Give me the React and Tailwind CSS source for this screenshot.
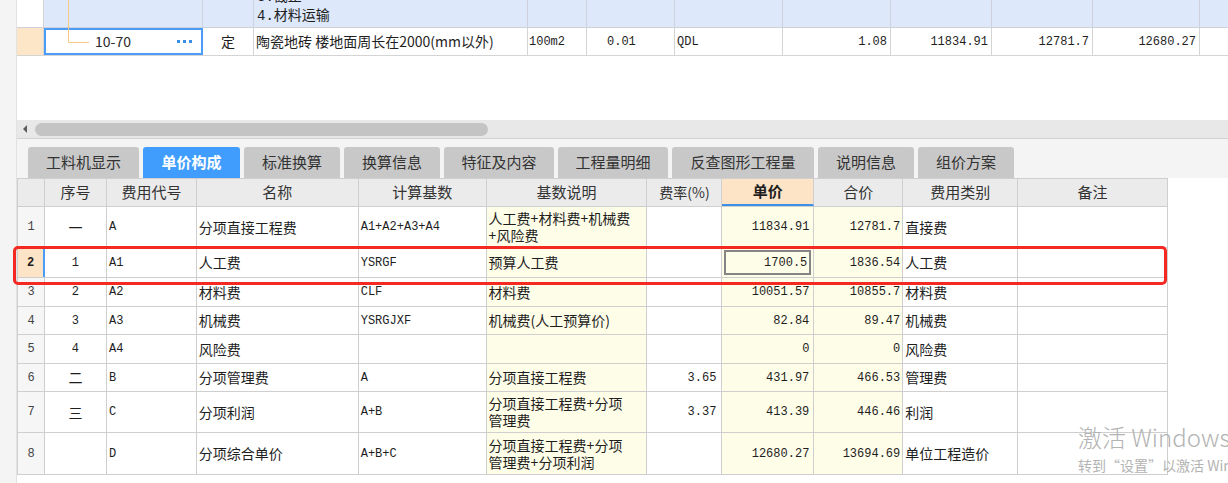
import React from "react";

const CJK = "font-['Noto_Sans_CJK_SC','Noto_Sans',sans-serif]";
const MONO = "font-['Liberation_Mono','Noto_Sans_CJK_SC',monospace]";

const tabs = [
  { label: "工料机显示", w: "w-[111px]" },
  { label: "单价构成", w: "w-[97px]", active: true },
  { label: "标准换算", w: "w-[96px]" },
  { label: "换算信息", w: "w-[96px]" },
  { label: "特征及内容", w: "w-[110px]" },
  { label: "工程量明细", w: "w-[110px]" },
  { label: "反查图形工程量", w: "w-[142px]" },
  { label: "说明信息", w: "w-[96px]" },
  { label: "组价方案", w: "w-[96px]" },
];

// lower table columns
const cols = [
  { key: "n", w: "w-[27px]", head: "" },
  { key: "seq", w: "w-[62px]", head: "序号" },
  { key: "code", w: "w-[90px]", head: "费用代号" },
  { key: "name", w: "w-[162px]", head: "名称" },
  { key: "base", w: "w-[128px]", head: "计算基数" },
  { key: "desc", w: "w-[161px]", head: "基数说明" },
  { key: "rate", w: "w-[75px]", head: "费率(%)" },
  { key: "price", w: "w-[92px]", head: "单价" },
  { key: "total", w: "w-[89px]", head: "合价" },
  { key: "cat", w: "w-[115px]", head: "费用类别" },
  { key: "note", w: "w-[150px]", head: "备注" },
];

const rows = [
  { h: "h-[41px]", n: "1", seq: "一", code: "A", name: "分项直接工程费", base: "A1+A2+A3+A4", desc: ["人工费+材料费+机械费", "+风险费"], rate: "", price: "11834.91", total: "12781.7", cat: "直接费" },
  { h: "h-[30px]", n: "2", seq: "1", code: "A1", name: "人工费", base: "YSRGF", desc: ["预算人工费"], rate: "", price: "1700.5", total: "1836.54", cat: "人工费", sel: true },
  { h: "h-[29px]", n: "3", seq: "2", code: "A2", name: "材料费", base: "CLF", desc: ["材料费"], rate: "", price: "10051.57", total: "10855.7", cat: "材料费" },
  { h: "h-[28px]", n: "4", seq: "3", code: "A3", name: "机械费", base: "YSRGJXF", desc: ["机械费(人工预算价)"], rate: "", price: "82.84", total: "89.47", cat: "机械费" },
  { h: "h-[29px]", n: "5", seq: "4", code: "A4", name: "风险费", base: "", desc: [""], rate: "", price: "0", total: "0", cat: "风险费" },
  { h: "h-[28px]", n: "6", seq: "二", code: "B", name: "分项管理费", base: "A", desc: ["分项直接工程费"], rate: "3.65", price: "431.97", total: "466.53", cat: "管理费" },
  { h: "h-[41px]", n: "7", seq: "三", code: "C", name: "分项利润", base: "A+B", desc: ["分项直接工程费+分项", "管理费"], rate: "3.37", price: "413.39", total: "446.46", cat: "利润" },
  { h: "h-[42px]", n: "8", seq: "", code: "D", name: "分项综合单价", base: "A+B+C", desc: ["分项直接工程费+分项", "管理费+分项利润"], rate: "", price: "12680.27", total: "13694.69", cat: "单位工程造价" },
];

const UpperGrid = () => (
  <div className="relative">
    {/* row: 3./4. 材料运输 */}
    <div className="flex h-[28px] border-b border-[#cdd2da] text-[14px]">
      <div className="w-[27px] bg-white border-r border-[#d4d4d4]" />
      <div className="w-[159px] bg-[#dde8fa] border-r border-[#cdd2da]" />
      <div className="w-[51px] bg-[#dde8fa] border-r border-[#cdd2da]" />
      <div className={`w-[274px] bg-[#dde8fa] border-r border-[#cdd2da] overflow-hidden flex flex-col justify-end pl-[3px] pb-[2px] leading-[17px] ${CJK}`}>
        <div><span className={MONO}>3.</span>截止</div>
        <div><span className={MONO}>4.</span>材料运输</div>
      </div>
      <div className="w-[59px] bg-[#dde8fa] border-r border-[#cdd2da]" />
      <div className="w-[88px] bg-[#dde8fa] border-r border-[#cdd2da]" />
      <div className="w-[108px] bg-[#dde8fa] border-r border-[#cdd2da]" />
      <div className="w-[108px] bg-[#dde8fa] border-r border-[#cdd2da]" />
      <div className="w-[101px] bg-[#dde8fa] border-r border-[#cdd2da]" />
      <div className="w-[101px] bg-[#dde8fa] border-r border-[#cdd2da]" />
      <div className="w-[107px] bg-[#dde8fa] border-r border-[#cdd2da]" />
      <div className="flex-1 bg-[#dde8fa]" />
    </div>
    {/* row: 10-70 */}
    <div className="flex h-[28px] border-b border-[#d4d4d4] text-[14px] items-stretch">
      <div className="w-[27px] bg-[#fde5c8] border-r border-[#d4d4d4]" />
      <div className={`w-[159px] border-2 border-[#4b9cf6] flex items-center justify-between pl-[49px] pr-[9px] ${CJK}`}>
        <span className="text-[#2a2a2a]">10-70</span>
        <span className="flex gap-[3px]">
          <span className="w-[3px] h-[3px] bg-[#3a8ee6]" />
          <span className="w-[3px] h-[3px] bg-[#3a8ee6]" />
          <span className="w-[3px] h-[3px] bg-[#3a8ee6]" />
        </span>
      </div>
      <div className={`w-[51px] border-r border-[#d4d4d4] flex items-center justify-center ${CJK}`}>定</div>
      <div className={`w-[274px] border-r border-[#d4d4d4] flex items-center pl-[2px] whitespace-nowrap ${CJK}`}>陶瓷地砖 楼地面周长在2000(mm以外)</div>
      <div className={`w-[59px] border-r border-[#d4d4d4] flex items-center pl-[1px] text-[12px] ${MONO}`}>100m2</div>
      <div className={`w-[88px] border-r border-[#d4d4d4] flex items-center pl-[20px] text-[12px] ${MONO}`}>0.01</div>
      <div className={`w-[108px] border-r border-[#d4d4d4] flex items-center pl-[2px] text-[12px] ${MONO}`}>QDL</div>
      <div className={`w-[108px] border-r border-[#d4d4d4] flex items-center justify-end pr-[3px] text-[12px] ${MONO}`}>1.08</div>
      <div className={`w-[101px] border-r border-[#d4d4d4] flex items-center justify-end pr-[3px] text-[12px] ${MONO}`}>11834.91</div>
      <div className={`w-[101px] border-r border-[#d4d4d4] flex items-center justify-end pr-[3px] text-[12px] ${MONO}`}>12781.7</div>
      <div className={`w-[107px] border-r border-[#d4d4d4] flex items-center justify-end pr-[3px] text-[12px] ${MONO}`}>12680.27</div>
      <div className="flex-1" />
    </div>
    {/* tree connector */}
    <svg className="absolute left-[50px] top-0" width="24" height="44">
      <path d="M1.5 0 V42.5 H22" stroke="#f7c985" strokeWidth="1" fill="none" />
    </svg>
  </div>
);

const ScrollBar = () => (
  <div className="h-[19px] bg-[#e8e8e8] border-b border-[#d2d2d2] flex items-center pl-[6px]">
    <div className="w-0 h-0 border-y-[4px] border-y-transparent border-r-[4px] border-r-[#5c5c5c]" />
    <div className="ml-[8px] w-[453px] h-[13px] rounded-full bg-[#c4c4c4]" />
  </div>
);

const Tabs = () => (
  <div className={`h-[39px] bg-[#f4f4f4] flex items-end gap-[4px] pl-[11px] text-[15px] ${CJK}`}>
    {tabs.map((t) => (
      <div
        key={t.label}
        className={`${t.w} h-[31px] rounded-t-[3px] flex items-center justify-center ${
          t.active ? "bg-[#409dfe] text-white font-bold" : "bg-[#c8c8c8] text-[#333]"
        }`}
      >
        {t.label}
      </div>
    ))}
  </div>
);

const cellBase = "border-r border-[#cfcfcf] flex items-center";

const Cell = ({ col, row }) => {
  const v = row[col.key];
  switch (col.key) {
    case "n":
      return (
        <div className={`${col.w} ${cellBase} justify-center text-[12px] ${MONO} ${row.sel ? "bg-[#fde4c6] font-bold border-r-2 border-r-[#4b9cf6]" : "bg-[#f6f6f6] text-[#444]"}`}>
          {v}
        </div>
      );
    case "seq":
      return <div className={`${col.w} ${cellBase} justify-center ${/\d/.test(v) ? `text-[12px] ${MONO}` : `text-[14px] ${CJK}`}`}>{v}</div>;
    case "code":
    case "base":
      return <div className={`${col.w} ${cellBase} pl-[2px] text-[12px] ${MONO}`}>{v}</div>;
    case "name":
    case "cat":
      return <div className={`${col.w} ${cellBase} pl-[2px] text-[14px] whitespace-nowrap ${CJK}`}>{v}</div>;
    case "desc":
      return (
        <div className={`${col.w} ${cellBase} bg-[#fefde8] pl-[2px] text-[14px] leading-[17px] ${CJK}`}>
          <div className="flex flex-col whitespace-nowrap">
            {v.map((l, i) => (
              <span key={i}>{l}</span>
            ))}
          </div>
        </div>
      );
    case "rate":
      return <div className={`${col.w} ${cellBase} justify-end pr-[5px] text-[12px] ${MONO}`}>{v}</div>;
    case "price":
      return (
        <div className={`${col.w} ${cellBase} bg-[#fefde8] text-[12px] ${MONO} ${row.sel ? "p-[2px]" : "justify-end pr-[4px]"}`}>
          {row.sel ? (
            <div className="w-full h-full border-2 border-[#858585] flex items-center justify-end pr-[2px]">{v}</div>
          ) : (
            v
          )}
        </div>
      );
    case "total":
      return <div className={`${col.w} ${cellBase} bg-[#fefde8] justify-end pr-[2px] text-[12px] ${MONO}`}>{v}</div>;
    default:
      return <div className={`${col.w} ${cellBase}`} />;
  }
};

const CostTable = () => (
  <div className="w-[1151px] border-t border-l border-[#cfcfcf] text-[#1e1e1e]">
    <div className={`flex h-[28px] border-b border-[#cfcfcf] bg-[#ebebeb] text-[15px] ${CJK}`}>
      {cols.map((c) =>
        c.key === "price" ? (
          <div key={c.key} className={`${c.w} ${cellBase} justify-center bg-[#fde4c6] font-bold border-b-2 border-b-[#3f8fe8]`}>
            {c.head}
          </div>
        ) : (
          <div key={c.key} className={`${c.w} ${cellBase} justify-center text-[#333] ${c.key === "rate" ? "text-[14px]" : ""}`}>
            {c.head}
          </div>
        )
      )}
    </div>
    {rows.map((r) => (
      <div key={r.n} className={`flex ${r.h} border-b border-[#cfcfcf]`}>
        {cols.map((c) => (
          <Cell key={c.key} col={c} row={r} />
        ))}
      </div>
    ))}
  </div>
);

export default function App() {
  return (
    <div className="relative w-[1228px] h-[483px] overflow-hidden flex bg-white text-[#1e1e1e]">
      <div className="w-[17px] shrink-0 bg-[#f4f4f4] border-r border-[#e2e2e2]" />
      <div className="flex-1 flex flex-col">
        <UpperGrid />
        <div className="h-[64px]" />
        <ScrollBar />
        <Tabs />
        <CostTable />
      </div>

      {/* red annotation box */}
      <div className="absolute left-[13px] top-[246px] w-[1154px] h-[39px] border-[3px] border-[#f42a22] rounded-[5px]" />

      {/* watermark */}
      <div className={`absolute left-[1078px] top-[421px] text-[#b3b3b3] whitespace-nowrap ${CJK}`}>
        <div className="text-[24px] leading-[32px] font-light">激活 Windows</div>
        <div className="text-[14px] leading-[20px] mt-[2px]">转到“设置”以激活 Windows。</div>
      </div>
    </div>
  );
}
